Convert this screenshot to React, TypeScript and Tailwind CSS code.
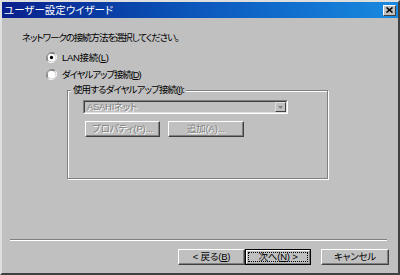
import React from "react";

const FONT = "font-['Liberation_Sans','Noto_Sans_CJK_JP',sans-serif] [font-feature-settings:'palt']";

function Radio({ checked }: { checked?: boolean }) {
  return (
    <svg width="11" height="11" viewBox="0 0 12 12" className="shrink-0">
      <path d="M10.2 1.8 A6 6 0 0 0 1.8 10.2" fill="none" stroke="#808080" strokeWidth="1" />
      <path d="M9.4 2.6 A4.9 4.9 0 0 0 2.6 9.4" fill="none" stroke="#404040" strokeWidth="1" />
      <path d="M1.8 10.2 A6 6 0 0 0 10.2 1.8" fill="none" stroke="#ffffff" strokeWidth="1" />
      <path d="M2.6 9.4 A4.9 4.9 0 0 0 9.4 2.6" fill="none" stroke="#dfdfdf" strokeWidth="1" />
      <circle cx="6" cy="6" r="4.2" fill="#ffffff" />
      {checked && <circle cx="6" cy="6" r="1.8" fill="#000" />}
    </svg>
  );
}

function Btn({
  children,
  w,
  disabled,
  def,
}: {
  children: React.ReactNode;
  w: string;
  disabled?: boolean;
  def?: boolean;
}) {
  const txt = disabled ? "text-[#808080] [text-shadow:1px_1px_0_#ffffff]" : "text-black";
  if (def) {
    return (
      <div className={`${w} h-[16px] border border-black flex tracking-[-0.2px]`}>
        <div className="flex-1 border border-t-white border-l-white border-r-[#808080] border-b-[#808080] flex p-[1px]">
          <div className={`flex-1 border border-dotted border-black flex items-center justify-center ${txt}`}>
            {children}
          </div>
        </div>
      </div>
    );
  }
  return (
    <div
      className={`${w} h-[16px] tracking-[-0.2px] border border-t-white border-l-white border-r-[#404040] border-b-[#404040] shadow-[inset_-1px_-1px_0_#808080] flex items-center justify-center ${txt}`}
    >
      {children}
    </div>
  );
}

export default function App() {
  return (
    <div
      className={`w-[400px] h-[275px] bg-[#c0c0c0] ${FONT} text-[9.5px] tracking-[-0.7px] leading-[12px] text-black border-2 border-t-[#dfdfdf] border-l-[#dfdfdf] border-r-[#404040] border-b-[#404040] flex flex-col overflow-hidden`}
    >
      {/* Title bar */}
      <div className="h-[16px] bg-gradient-to-r from-[#0a1f8c] via-[#0d58bc] to-[#1a8ae0] flex items-center pl-[2px] pr-[2px] shrink-0">
        <span className="text-white text-[10.5px] tracking-[0px]">ユーザー設定ウイザード</span>
        <div className="ml-auto w-[13px] h-[11px] bg-[#c0c0c0] border border-t-white border-l-white border-r-[#404040] border-b-[#404040] flex items-center justify-center">
          <svg width="7" height="6" viewBox="0 0 7 6">
            <path d="M0.5 0.5 L6.5 5.5 M6.5 0.5 L0.5 5.5" stroke="#000" strokeWidth="1.6" />
          </svg>
        </div>
      </div>

      {/* Body */}
      <div className="flex flex-col flex-1">
        <div className="pl-[20px] pt-[14px] h-[26px] tracking-[-1.1px]">ネットワークの接続方法を選択してください。</div>

        <div className="pl-[44px] mt-[5px] flex flex-col">
          <div className="h-[17px] flex items-center gap-[5px]">
            <Radio checked />
            <span className="tracking-[-0.3px]">LAN接続(<span className="underline">L</span>)</span>
          </div>
          <div className="h-[17px] flex items-center gap-[5px]">
            <Radio />
            <span className="tracking-[-1.1px]">ダイヤルアップ接続(<span className="underline">D</span>)</span>
          </div>
        </div>

        {/* Group box */}
        <div className="ml-[65px] mt-[7px] w-[261px] h-[89px] relative border border-[#808080] shadow-[inset_1px_1px_0_#ffffff,1px_1px_0_#ffffff] shrink-0">
          <span className="absolute left-[3px] top-[-7px] bg-[#c0c0c0] px-[2px] text-[#000] tracking-[-0.9px]">
            使用するダイヤルアップ接続(<span className="underline">I</span>):
          </span>
          <div className="pl-[15px] pt-[9px] flex flex-col">
            <div className="w-[205px] h-[14px] border border-t-[#808080] border-l-[#808080] border-r-white border-b-white flex">
              <div className="flex-1 border border-t-[#404040] border-l-[#404040] border-r-[#dfdfdf] border-b-[#dfdfdf] flex items-stretch">
                <div className="flex-1 pl-[2px] flex items-center text-[#808080] tracking-[-0.3px] [text-shadow:1px_1px_0_#ffffff]">ASAHIネット</div>
                <div className="w-[11px] border border-t-[#dfdfdf] border-l-[#dfdfdf] border-r-[#404040] border-b-[#404040] bg-[#c0c0c0] flex items-center justify-center">
                  <svg width="5" height="3" viewBox="0 0 5 3">
                    <path d="M0 0 H5 L2.5 3 Z" fill="#808080" />
                  </svg>
                </div>
              </div>
            </div>
            <div className="flex mt-[7px] ml-[2px] gap-[8px]">
              <Btn w="w-[75px]" disabled>プロパティ(P)...</Btn>
              <Btn w="w-[76px]" disabled>追加(A)...</Btn>
            </div>
          </div>
        </div>

        {/* Separator */}
        <div className="mt-[60px] ml-[8px] mr-[11px] h-[2px] border-t border-t-[#808080] border-b border-b-white shrink-0" />

        {/* Bottom buttons */}
        <div className="mt-[8px] flex pl-[176px]">
          <Btn w="w-[67px]">&lt; 戻る(<span className="underline">B</span>)</Btn>
          <Btn w="w-[66px]" def>次へ(<span className="underline">N</span>) &gt;</Btn>
          <div className="ml-[10px]">
            <Btn w="w-[68px]">キャンセル</Btn>
          </div>
        </div>
      </div>
    </div>
  );
}
